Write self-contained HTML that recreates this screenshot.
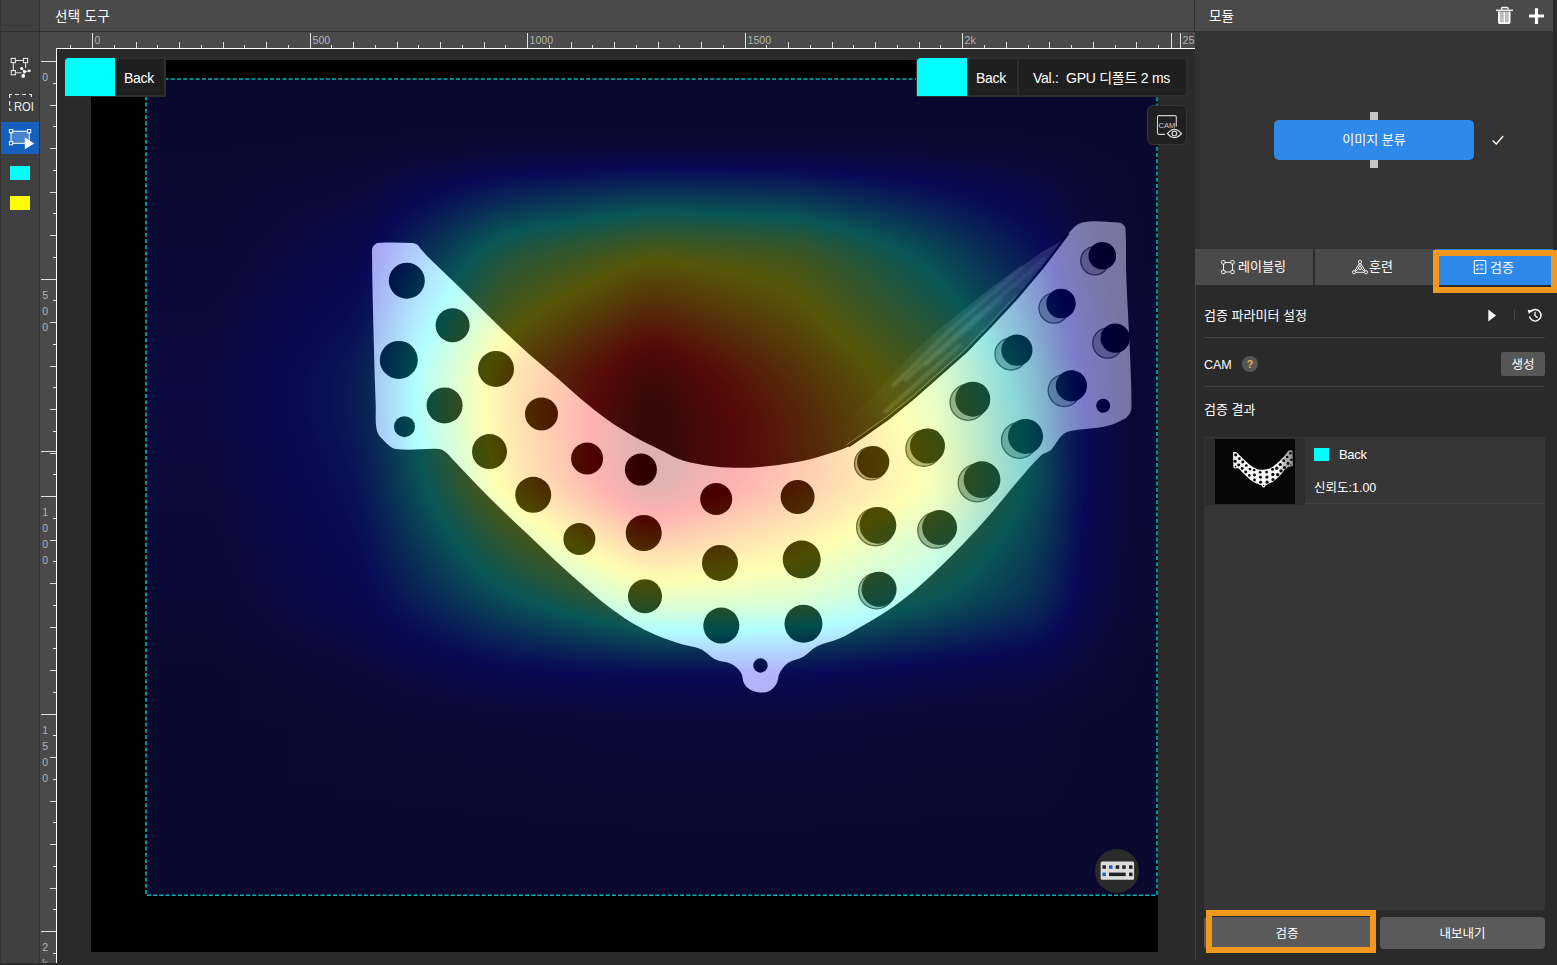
<!DOCTYPE html><html lang="ko"><head><meta charset="utf-8"><title>CAM</title><style>
*{box-sizing:border-box;margin:0;padding:0}
html,body{width:1557px;height:965px;overflow:hidden;background:#2a2a2a}
body{position:relative;font-family:"Liberation Sans","Noto Sans CJK KR",sans-serif;color:#f0f0f0;font-size:13px}
.abs{position:absolute}
.t{position:absolute;white-space:nowrap;line-height:1}
svg{position:absolute;display:block;overflow:visible}
</style></head><body><div class="abs" style="left:0;top:0;width:40px;height:965px;background:#3f3f3f;border-right:1px solid #323232"></div>
<div class="abs" style="left:0;top:31px;width:39px;height:1px;background:#303030"></div>
<div class="abs" style="left:40px;top:0;width:1155px;height:32px;background:#4a4a4a;border-bottom:1px solid #303030"></div>
<div class="t" style="left:55px;top:10px;font-size:13.5px;letter-spacing:0.3px;color:#fff">선택 도구</div>
<div class="abs" style="left:40px;top:32px;width:1155px;height:17px;background:#4a4a4a"></div>
<div class="abs" style="left:40px;top:32px;width:17px;height:933px;background:#4a4a4a"></div>
<div class="abs" style="left:57px;top:49px;width:1138px;height:916px;background:#2a2a2a"></div>
<div class="abs" style="left:91px;top:60px;width:1067px;height:892px;background:#000"></div>
<div class="abs" style="left:0;top:0;width:1px;height:965px;background:#353535"></div>
<svg style="left:0;top:0" width="1195" height="965" viewBox="0 0 1195 965" font-family='Liberation Sans, sans-serif'><path d="M56.5 965V48.5H1195" fill="none" stroke="#fff" stroke-width="1"/><path d="M70.5 45V48M92.5 33V48M114.5 45V48M136.5 42V48M157.5 45V48M179.5 42V48M201.5 45V48M223.5 42V48M244.5 45V48M266.5 42V48M288.5 45V48M310.5 33V48M331.5 45V48M353.5 42V48M375.5 45V48M397.5 42V48M418.5 45V48M440.5 42V48M462.5 45V48M484.5 42V48M505.5 45V48M527.5 33V48M549.5 45V48M571.5 42V48M592.5 45V48M614.5 42V48M636.5 45V48M658.5 42V48M679.5 45V48M701.5 42V48M723.5 45V48M745.5 33V48M766.5 45V48M788.5 42V48M810.5 45V48M832.5 42V48M853.5 45V48M875.5 42V48M897.5 45V48M919.5 42V48M940.5 45V48M962.5 33V48M984.5 45V48M1006.5 42V48M1028.5 45V48M1049.5 42V48M1071.5 45V48M1093.5 42V48M1115.5 45V48M1136.5 42V48M1158.5 45V48M1180.5 33V48M1171.5 33V48" stroke="#e0e0e0" stroke-width="1" fill="none"/><text x="94.5" y="44.2" font-size="10.6" fill="#b4b4b4">0</text><text x="312.5" y="44.2" font-size="10.6" fill="#b4b4b4">500</text><text x="529.5" y="44.2" font-size="10.6" fill="#b4b4b4">1000</text><text x="747.5" y="44.2" font-size="10.6" fill="#b4b4b4">1500</text><text x="964.5" y="44.2" font-size="10.6" fill="#b4b4b4">2k</text><text x="1182.5" y="44.2" font-size="10.6" fill="#b4b4b4">25</text><path d="M41 61.5H56M53 83.5H56M50 105.5H56M53 126.5H56M50 148.5H56M53 170.5H56M50 192.5H56M53 213.5H56M50 235.5H56M53 257.5H56M41 279.5H56M53 300.5H56M50 322.5H56M53 344.5H56M50 366.5H56M53 387.5H56M50 409.5H56M53 431.5H56M50 453.5H56M53 474.5H56M41 496.5H56M53 518.5H56M50 540.5H56M53 561.5H56M50 583.5H56M53 605.5H56M50 627.5H56M53 648.5H56M50 670.5H56M53 692.5H56M41 714.5H56M53 735.5H56M50 757.5H56M53 779.5H56M50 801.5H56M53 822.5H56M50 844.5H56M53 866.5H56M50 888.5H56M53 909.5H56M41 931.5H56M53 953.5H56M41 451.5H56" stroke="#e0e0e0" stroke-width="1" fill="none"/><text x="42.3" y="81.0" font-size="10.6" fill="#b4b4b4">0</text><text x="42.3" y="298.6" font-size="10.6" fill="#b4b4b4">5</text><text x="42.3" y="314.6" font-size="10.6" fill="#b4b4b4">0</text><text x="42.3" y="330.6" font-size="10.6" fill="#b4b4b4">0</text><text x="42.3" y="516.1" font-size="10.6" fill="#b4b4b4">1</text><text x="42.3" y="532.1" font-size="10.6" fill="#b4b4b4">0</text><text x="42.3" y="548.1" font-size="10.6" fill="#b4b4b4">0</text><text x="42.3" y="564.1" font-size="10.6" fill="#b4b4b4">0</text><text x="42.3" y="733.7" font-size="10.6" fill="#b4b4b4">1</text><text x="42.3" y="749.7" font-size="10.6" fill="#b4b4b4">5</text><text x="42.3" y="765.7" font-size="10.6" fill="#b4b4b4">0</text><text x="42.3" y="781.7" font-size="10.6" fill="#b4b4b4">0</text><text x="42.3" y="951.2" font-size="10.6" fill="#b4b4b4">2</text><text x="42.3" y="967.2" font-size="10.6" fill="#b4b4b4">k</text></svg>
<div class="abs" style="left:0;top:963px;width:1195px;height:2px;background:#2a2a2a"></div>
<svg style="left:0;top:0" width="1557" height="965" viewBox="0 0 1557 965"><defs><linearGradient id="hr0" gradientUnits="userSpaceOnUse" x1="217.3" y1="0" x2="1135.0" y2="0"><stop offset="0.0000" stop-color="rgb(0,0,0)"/><stop offset="0.1576" stop-color="rgb(0,0,0)"/><stop offset="0.3150" stop-color="rgb(0,0,0)"/><stop offset="0.4726" stop-color="rgb(0,0,0)"/><stop offset="0.6302" stop-color="rgb(0,0,0)"/><stop offset="0.7876" stop-color="rgb(0,0,0)"/><stop offset="0.8965" stop-color="rgb(0,0,0)"/><stop offset="0.9452" stop-color="rgb(0,0,0)"/><stop offset="1.0000" stop-color="rgb(0,0,0)"/></linearGradient><linearGradient id="hr1" gradientUnits="userSpaceOnUse" x1="217.3" y1="0" x2="1135.0" y2="0"><stop offset="0.0000" stop-color="rgb(5,0,0)"/><stop offset="0.1576" stop-color="rgb(23,0,0)"/><stop offset="0.3150" stop-color="rgb(117,0,0)"/><stop offset="0.4726" stop-color="rgb(156,0,0)"/><stop offset="0.6302" stop-color="rgb(143,0,0)"/><stop offset="0.7876" stop-color="rgb(84,0,0)"/><stop offset="0.8965" stop-color="rgb(38,0,0)"/><stop offset="0.9452" stop-color="rgb(10,0,0)"/><stop offset="1.0000" stop-color="rgb(0,0,0)"/></linearGradient><linearGradient id="hr2" gradientUnits="userSpaceOnUse" x1="217.3" y1="0" x2="1135.0" y2="0"><stop offset="0.0000" stop-color="rgb(13,0,0)"/><stop offset="0.1576" stop-color="rgb(48,0,0)"/><stop offset="0.3150" stop-color="rgb(178,0,0)"/><stop offset="0.4726" stop-color="rgb(245,0,0)"/><stop offset="0.6302" stop-color="rgb(191,0,0)"/><stop offset="0.7876" stop-color="rgb(135,0,0)"/><stop offset="0.8965" stop-color="rgb(74,0,0)"/><stop offset="0.9452" stop-color="rgb(26,0,0)"/><stop offset="1.0000" stop-color="rgb(5,0,0)"/></linearGradient><linearGradient id="hr3" gradientUnits="userSpaceOnUse" x1="217.3" y1="0" x2="1135.0" y2="0"><stop offset="0.0000" stop-color="rgb(13,0,0)"/><stop offset="0.1576" stop-color="rgb(48,0,0)"/><stop offset="0.3150" stop-color="rgb(178,0,0)"/><stop offset="0.4726" stop-color="rgb(255,0,0)"/><stop offset="0.6302" stop-color="rgb(204,0,0)"/><stop offset="0.7876" stop-color="rgb(143,0,0)"/><stop offset="0.8965" stop-color="rgb(82,0,0)"/><stop offset="0.9452" stop-color="rgb(31,0,0)"/><stop offset="1.0000" stop-color="rgb(5,0,0)"/></linearGradient><linearGradient id="hr4" gradientUnits="userSpaceOnUse" x1="217.3" y1="0" x2="1135.0" y2="0"><stop offset="0.0000" stop-color="rgb(10,0,0)"/><stop offset="0.1576" stop-color="rgb(41,0,0)"/><stop offset="0.3150" stop-color="rgb(168,0,0)"/><stop offset="0.4726" stop-color="rgb(255,0,0)"/><stop offset="0.6302" stop-color="rgb(204,0,0)"/><stop offset="0.7876" stop-color="rgb(153,0,0)"/><stop offset="0.8965" stop-color="rgb(87,0,0)"/><stop offset="0.9452" stop-color="rgb(31,0,0)"/><stop offset="1.0000" stop-color="rgb(5,0,0)"/></linearGradient><linearGradient id="hr5" gradientUnits="userSpaceOnUse" x1="217.3" y1="0" x2="1135.0" y2="0"><stop offset="0.0000" stop-color="rgb(5,0,0)"/><stop offset="0.1576" stop-color="rgb(26,0,0)"/><stop offset="0.3150" stop-color="rgb(87,0,0)"/><stop offset="0.4726" stop-color="rgb(138,0,0)"/><stop offset="0.6302" stop-color="rgb(133,0,0)"/><stop offset="0.7876" stop-color="rgb(94,0,0)"/><stop offset="0.8965" stop-color="rgb(61,0,0)"/><stop offset="0.9452" stop-color="rgb(23,0,0)"/><stop offset="1.0000" stop-color="rgb(3,0,0)"/></linearGradient><linearGradient id="hr6" gradientUnits="userSpaceOnUse" x1="217.3" y1="0" x2="1135.0" y2="0"><stop offset="0.0000" stop-color="rgb(0,0,0)"/><stop offset="0.1576" stop-color="rgb(8,0,0)"/><stop offset="0.3150" stop-color="rgb(26,0,0)"/><stop offset="0.4726" stop-color="rgb(33,0,0)"/><stop offset="0.6302" stop-color="rgb(31,0,0)"/><stop offset="0.7876" stop-color="rgb(20,0,0)"/><stop offset="0.8965" stop-color="rgb(15,0,0)"/><stop offset="0.9452" stop-color="rgb(8,0,0)"/><stop offset="1.0000" stop-color="rgb(0,0,0)"/></linearGradient><linearGradient id="hr7" gradientUnits="userSpaceOnUse" x1="217.3" y1="0" x2="1135.0" y2="0"><stop offset="0.0000" stop-color="rgb(0,0,0)"/><stop offset="0.1576" stop-color="rgb(3,0,0)"/><stop offset="0.3150" stop-color="rgb(5,0,0)"/><stop offset="0.4726" stop-color="rgb(8,0,0)"/><stop offset="0.6302" stop-color="rgb(8,0,0)"/><stop offset="0.7876" stop-color="rgb(5,0,0)"/><stop offset="0.8965" stop-color="rgb(5,0,0)"/><stop offset="0.9452" stop-color="rgb(0,0,0)"/><stop offset="1.0000" stop-color="rgb(0,0,0)"/></linearGradient><linearGradient id="hr8" gradientUnits="userSpaceOnUse" x1="217.3" y1="0" x2="1135.0" y2="0"><stop offset="0.0000" stop-color="rgb(0,0,0)"/><stop offset="0.1576" stop-color="rgb(0,0,0)"/><stop offset="0.3150" stop-color="rgb(0,0,0)"/><stop offset="0.4726" stop-color="rgb(0,0,0)"/><stop offset="0.6302" stop-color="rgb(0,0,0)"/><stop offset="0.7876" stop-color="rgb(0,0,0)"/><stop offset="0.8965" stop-color="rgb(0,0,0)"/><stop offset="0.9452" stop-color="rgb(0,0,0)"/><stop offset="1.0000" stop-color="rgb(0,0,0)"/></linearGradient><linearGradient id="hm0" gradientUnits="userSpaceOnUse" x1="0" y1="146.0" x2="0" y2="253.1"><stop offset="0" stop-color="#fff" stop-opacity="0"/><stop offset="1" stop-color="#fff" stop-opacity="1"/></linearGradient><mask id="hk0" maskUnits="userSpaceOnUse" x="75" y="145.0" width="1152" height="109.1"><rect x="75" y="145.0" width="1152" height="109.1" fill="url(#hm0)"/></mask><linearGradient id="hm1" gradientUnits="userSpaceOnUse" x1="0" y1="253.1" x2="0" y2="369.8"><stop offset="0" stop-color="#fff" stop-opacity="0"/><stop offset="1" stop-color="#fff" stop-opacity="1"/></linearGradient><mask id="hk1" maskUnits="userSpaceOnUse" x="75" y="252.1" width="1152" height="118.7"><rect x="75" y="252.1" width="1152" height="118.7" fill="url(#hm1)"/></mask><linearGradient id="hm2" gradientUnits="userSpaceOnUse" x1="0" y1="369.8" x2="0" y2="420.0"><stop offset="0" stop-color="#fff" stop-opacity="0"/><stop offset="1" stop-color="#fff" stop-opacity="1"/></linearGradient><mask id="hk2" maskUnits="userSpaceOnUse" x="75" y="368.8" width="1152" height="52.2"><rect x="75" y="368.8" width="1152" height="52.2" fill="url(#hm2)"/></mask><linearGradient id="hm3" gradientUnits="userSpaceOnUse" x1="0" y1="420.0" x2="0" y2="486.5"><stop offset="0" stop-color="#fff" stop-opacity="0"/><stop offset="1" stop-color="#fff" stop-opacity="1"/></linearGradient><mask id="hk3" maskUnits="userSpaceOnUse" x="75" y="419.0" width="1152" height="68.5"><rect x="75" y="419.0" width="1152" height="68.5" fill="url(#hm3)"/></mask><linearGradient id="hm4" gradientUnits="userSpaceOnUse" x1="0" y1="486.5" x2="0" y2="603.2"><stop offset="0" stop-color="#fff" stop-opacity="0"/><stop offset="1" stop-color="#fff" stop-opacity="1"/></linearGradient><mask id="hk4" maskUnits="userSpaceOnUse" x="75" y="485.5" width="1152" height="118.7"><rect x="75" y="485.5" width="1152" height="118.7" fill="url(#hm4)"/></mask><linearGradient id="hm5" gradientUnits="userSpaceOnUse" x1="0" y1="603.2" x2="0" y2="672.0"><stop offset="0" stop-color="#fff" stop-opacity="0"/><stop offset="1" stop-color="#fff" stop-opacity="1"/></linearGradient><mask id="hk5" maskUnits="userSpaceOnUse" x="75" y="602.2" width="1152" height="70.8"><rect x="75" y="602.2" width="1152" height="70.8" fill="url(#hm5)"/></mask><linearGradient id="hm6" gradientUnits="userSpaceOnUse" x1="0" y1="672.0" x2="0" y2="719.9"><stop offset="0" stop-color="#fff" stop-opacity="0"/><stop offset="1" stop-color="#fff" stop-opacity="1"/></linearGradient><mask id="hk6" maskUnits="userSpaceOnUse" x="75" y="671.0" width="1152" height="49.9"><rect x="75" y="671.0" width="1152" height="49.9" fill="url(#hm6)"/></mask><linearGradient id="hm7" gradientUnits="userSpaceOnUse" x1="0" y1="719.9" x2="0" y2="836.6"><stop offset="0" stop-color="#fff" stop-opacity="0"/><stop offset="1" stop-color="#fff" stop-opacity="1"/></linearGradient><mask id="hk7" maskUnits="userSpaceOnUse" x="75" y="718.9" width="1152" height="118.7"><rect x="75" y="718.9" width="1152" height="118.7" fill="url(#hm7)"/></mask><linearGradient id="pg" gradientUnits="userSpaceOnUse" x1="372" y1="0" x2="1131" y2="0"><stop offset="0" stop-color="rgb(0,166,0)"/><stop offset="0.06" stop-color="rgb(0,178,0)"/><stop offset="0.74" stop-color="rgb(0,178,0)"/><stop offset="0.83" stop-color="rgb(0,145,0)"/><stop offset="0.9" stop-color="rgb(0,125,0)"/><stop offset="1" stop-color="rgb(0,117,0)"/></linearGradient><linearGradient id="fg" gradientUnits="userSpaceOnUse" x1="1070" y1="232" x2="835" y2="440"><stop offset="0" stop-color="rgb(0,43,0)"/><stop offset="0.5" stop-color="rgb(0,23,0)"/><stop offset="1" stop-color="rgb(0,9,0)"/></linearGradient><filter id="soft" x="-0.1" y="-0.1" width="1.2" height="1.2"><feGaussianBlur stdDeviation="1.6"/></filter><filter id="cam" filterUnits="userSpaceOnUse" x="75" y="8" width="1152" height="957" color-interpolation-filters="sRGB"><feColorMatrix in="SourceGraphic" type="matrix" values="1 0 0 0 0 1 0 0 0 0 1 0 0 0 0 0 0 0 0 1" result="hg"/><feGaussianBlur in="hg" stdDeviation="13" result="hb"/><feComponentTransfer in="hb" result="heat"><feFuncR type="table" tableValues="0.000 0.000 0.000 0.000 0.000 0.000 0.000 0.000 0.000 0.000 0.000 0.000 0.000 0.038 0.076 0.114 0.152 0.191 0.229 0.267 0.305 0.305 0.305 0.305 0.305 0.305 0.305 0.305 0.305 0.267 0.229 0.191 0.152"/><feFuncG type="table" tableValues="0.000 0.000 0.000 0.000 0.000 0.038 0.076 0.114 0.152 0.191 0.229 0.267 0.305 0.305 0.305 0.305 0.305 0.305 0.305 0.305 0.305 0.267 0.229 0.191 0.152 0.114 0.076 0.038 0.000 0.000 0.000 0.000 0.000"/><feFuncB type="table" tableValues="0.152 0.191 0.229 0.267 0.305 0.305 0.305 0.305 0.305 0.305 0.305 0.305 0.305 0.267 0.229 0.191 0.152 0.114 0.076 0.038 0.000 0.000 0.000 0.000 0.000 0.000 0.000 0.000 0.000 0.000 0.000 0.000 0.000"/></feComponentTransfer><feColorMatrix in="SourceGraphic" type="matrix" values="0 1 0 0 0 0 1 0 0 0 0 1 0 0 0 0 0 0 0 1" result="gray"/><feComposite in="heat" in2="gray" operator="arithmetic" k1="0" k2="1" k3="1" k4="0"/></filter></defs><clipPath id="hclip"><rect x="145" y="78" width="1012" height="817"/></clipPath><g clip-path="url(#hclip)"><g filter="url(#cam)"><g><rect x="75" y="8" width="1152" height="138.5" fill="url(#hr0)"/><rect x="75" y="146.0" width="1152" height="107.6" fill="url(#hr0)"/><rect x="75" y="146.0" width="1152" height="107.6" fill="url(#hr1)" mask="url(#hk0)"/><rect x="75" y="253.1" width="1152" height="117.2" fill="url(#hr1)"/><rect x="75" y="253.1" width="1152" height="117.2" fill="url(#hr2)" mask="url(#hk1)"/><rect x="75" y="369.8" width="1152" height="50.7" fill="url(#hr2)"/><rect x="75" y="369.8" width="1152" height="50.7" fill="url(#hr3)" mask="url(#hk2)"/><rect x="75" y="420.0" width="1152" height="67.0" fill="url(#hr3)"/><rect x="75" y="420.0" width="1152" height="67.0" fill="url(#hr4)" mask="url(#hk3)"/><rect x="75" y="486.5" width="1152" height="117.2" fill="url(#hr4)"/><rect x="75" y="486.5" width="1152" height="117.2" fill="url(#hr5)" mask="url(#hk4)"/><rect x="75" y="603.2" width="1152" height="69.3" fill="url(#hr5)"/><rect x="75" y="603.2" width="1152" height="69.3" fill="url(#hr6)" mask="url(#hk5)"/><rect x="75" y="672.0" width="1152" height="48.4" fill="url(#hr6)"/><rect x="75" y="672.0" width="1152" height="48.4" fill="url(#hr7)" mask="url(#hk6)"/><rect x="75" y="719.9" width="1152" height="117.2" fill="url(#hr7)"/><rect x="75" y="719.9" width="1152" height="117.2" fill="url(#hr8)" mask="url(#hk7)"/><rect x="75" y="836.6" width="1152" height="128.4" fill="url(#hr8)"/></g><g style="mix-blend-mode:screen"><rect x="75" y="8" width="1152" height="957" fill="rgb(0,9,0)"/><path d="M1061.0 241.0 L1043.0 251.4 L1017.0 269.4 L991.4 287.4 L965.7 308.0 L940.0 328.5 L914.0 351.7 L888.5 380.0 L863.0 405.7 L837.0 431.0 L824.0 448.0 L848.5 446.4 L863.0 436.5 L888.5 418.5 L914.0 398.0 L940.0 375.0 L966.0 352.0 L991.0 326.0 L1017.0 298.0 L1043.0 267.0 L1068.5 233.4 L1082.6 222.6Z" fill="url(#fg)"/><g filter="url(#soft)"><path d="M1046 258L975 318L905 380M1022 268L950 330L893 386M1000 300L925 365M960 345L885 412" fill="none" stroke="rgb(0,51,0)" stroke-width="3" stroke-linecap="round"/></g><path d="M372.0 250.0C372.0 248.6 372.6 247.1 373.5 246.0C374.7 244.6 376.2 243.1 378.0 243.0C389.3 242.1 400.7 242.6 412.0 243.0C413.7 243.1 415.5 243.6 417.0 244.5C418.3 245.3 419.0 246.8 420.0 248.0C422.3 250.7 424.5 253.5 427.0 256.0C435.5 264.5 444.4 272.6 453.0 281.0C461.5 289.3 470.0 297.7 478.5 306.0C487.0 314.3 495.4 322.8 504.0 331.0C512.5 339.1 521.2 347.2 530.0 355.0C538.5 362.5 547.4 369.6 556.0 377.0C564.4 384.3 572.5 391.9 581.0 399.0C589.5 406.1 598.0 413.1 607.0 419.5C615.4 425.5 624.1 430.9 633.0 436.0C641.3 440.7 649.9 444.8 658.5 449.0C666.6 453.0 674.4 457.7 683.0 460.6C691.2 463.3 699.9 464.5 708.5 465.7C716.9 466.9 725.5 467.6 734.0 467.8C742.7 468.0 751.4 467.8 760.0 467.0C772.4 465.9 784.8 464.3 797.0 462.0C805.8 460.4 814.4 458.0 823.0 455.4C831.6 452.8 840.4 450.3 848.5 446.4C853.8 443.9 858.2 439.8 863.0 436.5C871.5 430.5 880.2 424.8 888.5 418.5C897.2 411.9 905.7 405.0 914.0 398.0C922.8 390.5 931.3 382.7 940.0 375.0C948.7 367.3 957.7 360.0 966.0 352.0C974.7 343.7 982.7 334.7 991.0 326.0C999.7 316.7 1008.6 307.6 1017.0 298.0C1025.9 287.9 1034.6 277.5 1043.0 267.0C1051.8 256.0 1059.1 243.9 1068.5 233.4C1072.4 229.0 1076.8 223.9 1082.6 222.6C1094.1 220.1 1106.2 222.0 1118.0 222.6C1119.8 222.7 1121.6 223.3 1123.0 224.5C1124.3 225.6 1125.4 227.3 1125.5 229.0C1126.5 245.0 1125.7 261.0 1126.3 277.0C1127.2 302.7 1129.0 328.3 1130.0 354.0C1130.7 371.2 1131.5 388.5 1131.5 405.7C1131.5 408.2 1131.1 410.8 1130.0 413.0C1128.9 415.2 1127.2 417.3 1125.0 418.5C1119.3 421.7 1113.3 424.6 1107.0 426.0C1094.4 428.9 1081.1 428.5 1068.5 431.4C1065.5 432.1 1062.9 434.3 1060.8 436.5C1057.0 440.5 1055.0 446.2 1051.0 450.0C1048.3 452.6 1043.7 452.8 1041.0 455.4C1031.8 464.1 1023.9 474.1 1015.6 483.7C1006.9 493.8 998.8 504.4 990.0 514.5C981.6 524.2 972.9 533.7 964.0 543.0C955.7 551.7 947.2 560.2 938.5 568.5C930.2 576.4 921.9 584.4 913.0 591.7C904.7 598.6 896.0 605.0 887.0 611.0C878.7 616.6 870.0 621.4 861.4 626.4C854.3 630.5 847.4 634.9 840.0 638.2C832.5 641.6 824.1 642.7 816.7 646.4C811.7 648.9 808.2 653.9 803.3 656.7C798.5 659.4 792.5 659.8 788.0 662.9C784.4 665.4 781.8 669.2 779.7 673.0C777.9 676.2 778.4 680.3 776.6 683.4C774.9 686.4 772.5 689.3 769.4 691.0C766.7 692.5 763.3 692.6 760.2 692.5C757.4 692.4 754.5 691.9 752.0 690.6C749.2 689.1 746.4 687.2 744.7 684.5C742.4 680.8 743.0 675.7 740.6 672.0C738.4 668.6 735.1 665.7 731.4 663.9C726.6 661.5 720.8 662.1 716.0 659.8C710.3 657.1 706.2 651.6 700.5 649.0C695.0 646.4 688.6 646.2 682.8 644.4C674.1 641.7 665.4 639.0 657.0 635.4C648.2 631.7 639.6 627.4 631.4 622.5C622.4 617.1 614.0 610.9 605.7 604.5C596.8 597.6 588.5 590.1 580.0 582.7C571.3 575.1 562.7 567.4 554.2 559.5C545.5 551.5 537.1 543.1 528.5 535.0C519.9 526.9 511.3 518.9 502.8 510.7C494.1 502.2 485.5 493.7 477.0 485.0C468.3 476.1 460.0 467.0 451.4 458.0C449.3 455.8 447.5 453.3 445.0 451.6C443.1 450.3 440.9 449.1 438.6 449.0C424.4 448.2 410.1 451.0 396.0 449.0C391.5 448.4 388.0 444.5 384.7 441.4C381.6 438.4 378.0 435.2 377.0 431.0C374.9 422.6 376.0 413.7 375.7 405.0C374.9 383.0 374.2 361.0 373.7 339.0C373.0 309.3 372.1 279.7 372.0 250.0Z" fill="url(#pg)"/><circle cx="406.8" cy="280.7" r="18.0" fill="rgb(0,0,0)"/><circle cx="452.6" cy="325.2" r="17.0" fill="rgb(0,0,0)"/><circle cx="398.8" cy="359.9" r="19.0" fill="rgb(0,0,0)"/><circle cx="496.0" cy="368.9" r="18.0" fill="rgb(0,0,0)"/><circle cx="444.6" cy="405.4" r="18.0" fill="rgb(0,0,0)"/><circle cx="404.5" cy="426.7" r="10.5" fill="rgb(0,0,0)"/><circle cx="541.5" cy="413.9" r="16.5" fill="rgb(0,0,0)"/><circle cx="489.5" cy="451.6" r="17.5" fill="rgb(0,0,0)"/><circle cx="587.1" cy="458.5" r="16.0" fill="rgb(0,0,0)"/><circle cx="640.9" cy="469.6" r="16.0" fill="rgb(0,0,0)"/><circle cx="533.2" cy="494.8" r="18.0" fill="rgb(0,0,0)"/><circle cx="579.4" cy="539.0" r="16.0" fill="rgb(0,0,0)"/><circle cx="643.7" cy="533.0" r="18.0" fill="rgb(0,0,0)"/><circle cx="716.2" cy="499.0" r="16.0" fill="rgb(0,0,0)"/><circle cx="797.6" cy="497.0" r="17.0" fill="rgb(0,0,0)"/><circle cx="720.0" cy="562.9" r="18.0" fill="rgb(0,0,0)"/><circle cx="645.0" cy="596.3" r="17.0" fill="rgb(0,0,0)"/><circle cx="721.3" cy="625.6" r="18.0" fill="rgb(0,0,0)"/><circle cx="801.7" cy="559.5" r="19.0" fill="rgb(0,0,0)"/><circle cx="803.5" cy="623.8" r="19.0" fill="rgb(0,0,0)"/><circle cx="870.9" cy="463.5" r="16.4" fill="rgb(0,112,0)" stroke="rgb(0,38,0)" stroke-width="1.3"/><circle cx="873.2" cy="462.0" r="16.1" fill="rgb(0,0,0)"/><circle cx="923.8" cy="448.5" r="17.9" fill="rgb(0,106,0)" stroke="rgb(0,38,0)" stroke-width="1.3"/><circle cx="927.5" cy="446.0" r="17.5" fill="rgb(0,0,0)"/><circle cx="875.4" cy="527.0" r="18.8" fill="rgb(0,112,0)" stroke="rgb(0,38,0)" stroke-width="1.3"/><circle cx="877.9" cy="525.3" r="18.4" fill="rgb(0,0,0)"/><circle cx="935.7" cy="530.3" r="17.9" fill="rgb(0,105,0)" stroke="rgb(0,38,0)" stroke-width="1.3"/><circle cx="939.6" cy="527.6" r="17.5" fill="rgb(0,0,0)"/><circle cx="977.0" cy="483.0" r="18.8" fill="rgb(0,100,0)" stroke="rgb(0,38,0)" stroke-width="1.3"/><circle cx="982.0" cy="479.7" r="18.4" fill="rgb(0,0,0)"/><circle cx="876.6" cy="591.0" r="17.9" fill="rgb(0,112,0)" stroke="rgb(0,38,0)" stroke-width="1.3"/><circle cx="879.1" cy="589.3" r="17.5" fill="rgb(0,0,0)"/><circle cx="1019.4" cy="440.4" r="17.9" fill="rgb(0,96,0)" stroke="rgb(0,38,0)" stroke-width="1.3"/><circle cx="1025.5" cy="436.4" r="17.5" fill="rgb(0,0,0)"/><circle cx="968.0" cy="402.4" r="17.9" fill="rgb(0,101,0)" stroke="rgb(0,38,0)" stroke-width="1.3"/><circle cx="972.8" cy="399.2" r="17.5" fill="rgb(0,0,0)"/><circle cx="1011.0" cy="354.0" r="16.0" fill="rgb(0,97,0)" stroke="rgb(0,38,0)" stroke-width="1.3"/><circle cx="1016.9" cy="350.1" r="15.6" fill="rgb(0,0,0)"/><circle cx="1054.0" cy="308.2" r="15.0" fill="rgb(0,92,0)" stroke="rgb(0,38,0)" stroke-width="1.3"/><circle cx="1061.0" cy="303.5" r="14.7" fill="rgb(0,0,0)"/><circle cx="1094.8" cy="260.8" r="14.1" fill="rgb(0,89,0)" stroke="rgb(0,38,0)" stroke-width="1.3"/><circle cx="1102.3" cy="255.8" r="13.8" fill="rgb(0,0,0)"/><circle cx="1107.7" cy="343.1" r="15.0" fill="rgb(0,89,0)" stroke="rgb(0,38,0)" stroke-width="1.3"/><circle cx="1115.2" cy="338.1" r="14.7" fill="rgb(0,0,0)"/><circle cx="1064.2" cy="390.6" r="16.0" fill="rgb(0,91,0)" stroke="rgb(0,38,0)" stroke-width="1.3"/><circle cx="1071.4" cy="385.8" r="15.6" fill="rgb(0,0,0)"/><circle cx="1103.2" cy="405.7" r="7.0" fill="rgb(0,0,0)"/><circle cx="760.5" cy="665.5" r="7.2" fill="rgb(0,0,0)"/><path d="M1068.5 233.4 L1043.0 267.0 L1017.0 298.0 L991.0 326.0 L966.0 352.0 L940.0 375.0 L914.0 398.0 L888.5 418.5 L863.0 436.5 L848.5 446.4" fill="none" stroke="rgb(0,0,0)" stroke-width="2.2"/><path d="M1017.0 298.0 L991.0 326.0 L966.0 352.0 L940.0 375.0 L914.0 398.0 L888.5 418.5 L863.0 436.5 L848.5 446.4" fill="none" stroke="rgb(0,76,0)" stroke-width="1" transform="translate(-1.8,-1.6)"/></g></g></g><rect x="146" y="79" width="1011" height="816.3" fill="none" stroke="#000" stroke-width="2"/><rect x="146" y="79" width="1011" height="816.3" fill="none" stroke="#00b6c2" stroke-width="1.6" stroke-dasharray="4 2.2"/></svg>
<div class="abs" style="left:64px;top:57px;width:102px;height:40px;background:#2e2e2e;border-radius:4px 2px 2px 2px"></div><div class="abs" style="left:65px;top:58px;width:50px;height:38px;background:#00ffff;border-radius:4px 0 0 0"></div><div class="abs" style="left:115px;top:59px;width:49px;height:36px;background:#1f1f1f"></div><div class="t" style="left:124px;top:71px;font-size:14px;color:#fff;letter-spacing:-0.3px">Back</div>
<div class="abs" style="left:916px;top:57px;width:271px;height:40px;background:#2e2e2e;border-radius:4px 2px 2px 2px"></div><div class="abs" style="left:917px;top:58px;width:50px;height:38px;background:#00ffff;border-radius:4px 0 0 0"></div><div class="abs" style="left:967px;top:59px;width:50px;height:36px;background:#1f1f1f"></div><div class="t" style="left:976px;top:71px;font-size:14px;color:#fff;letter-spacing:-0.3px">Back</div><div class="abs" style="left:1019px;top:59px;width:167px;height:36px;background:#1f1f1f"></div><div class="t" style="left:1033px;top:71px;font-size:14px;color:#fff;letter-spacing:-0.25px">Val.:&nbsp; GPU 디폴트 2 ms</div>
<div class="abs" style="left:1147px;top:105px;width:40px;height:40px;background:#202020;border:1px solid #363636;border-radius:6px"></div>
<svg style="left:1147px;top:105px" width="40" height="40" viewBox="1147 105 40 40"><path d="M1176.3 126.5V117a1.4 1.4 0 0 0-1.4-1.4h-16a1.4 1.4 0 0 0-1.4 1.4v16a1.4 1.4 0 0 0 1.4 1.4H1165" fill="none" stroke="#d0d0d0" stroke-width="1.1"/><text x="1158.6" y="127.6" font-size="7.6" fill="#d0d0d0" font-family="Liberation Sans, sans-serif" textLength="16.8" lengthAdjust="spacingAndGlyphs">CAM</text><path d="M1167.5 133.5q6.900-8.2 13.900 0q-7 8.2-13.900 0z" fill="#202020" stroke="#d0d0d0" stroke-width="1.3"/><circle cx="1174.4" cy="133.5" r="2.3" fill="none" stroke="#d0d0d0" stroke-width="1.3"/></svg>
<svg style="left:1090px;top:845px" width="56" height="56" viewBox="1090 845 56 56"><circle cx="1117" cy="871.5" r="22" fill="#000" opacity="0.25"/><circle cx="1117" cy="871" r="22" fill="#2a2a2a"/><rect x="1100.7" y="861.5" width="33.4" height="18.2" rx="1.5" fill="#dcdcdc"/><rect x="1102.4" y="865.3" width="3.5" height="3.5" fill="#222"/><rect x="1109.0" y="865.3" width="3.5" height="3.5" fill="#1565c8"/><rect x="1115.7" y="865.3" width="3.5" height="3.5" fill="#222"/><rect x="1122.2" y="865.3" width="3.5" height="3.5" fill="#222"/><rect x="1129.0" y="865.3" width="3.5" height="3.5" fill="#222"/><rect x="1102.4" y="872.6" width="3.5" height="3.5" fill="#1565c8"/><rect x="1109" y="872.6" width="16.7" height="3.5" fill="#222"/><rect x="1129" y="872.6" width="3.5" height="3.5" fill="#222"/></svg>
<svg style="left:0;top:0" width="40" height="230" viewBox="0 0 40 230"><g fill="none" stroke="#e4e4e4" stroke-width="1.1"><rect x="11.2" y="58.4" width="4.2" height="4.2"/><rect x="23.5" y="58.4" width="4.2" height="4.2"/><rect x="11.2" y="70.6" width="4.2" height="4.2"/><path d="M15.4 60.5H23.5M13.3 62.6V70.6M25.6 62.6V68M15.4 72.7H21.5"/><path d="M21.7 68.5L24.6 71.6L29.3 70.8M24.6 71.6L23.2 75.9" stroke-width="1"/></g><g fill="#fff"><circle cx="21.7" cy="68.5" r="1.6"/><circle cx="24.6" cy="71.6" r="1.7"/><circle cx="29.3" cy="70.8" r="1.4"/><circle cx="23.2" cy="75.9" r="1.9"/></g><path d="M9.6 98V94.5H12M15 94.5H19M22 94.5H26M29 94.5H31.4V97M9.6 101V105.5M9.6 108V110.2H12" fill="none" stroke="#e8e8e8" stroke-width="1.1"/><text x="14" y="110.7" font-size="12.3" fill="#f0f0f0" font-family="Liberation Sans, sans-serif" textLength="20" lengthAdjust="spacingAndGlyphs">ROI</text><rect x="1" y="122" width="38" height="32" fill="#1560bd"/><rect x="11" y="131.2" width="18.2" height="12.1" fill="#fff" fill-opacity="0.22" stroke="#fff" stroke-width="1"/><g fill="#1560bd" stroke="#fff" stroke-width="1"><rect x="9.4" y="129.6" width="3.2" height="3.2"/><rect x="27.5" y="129.6" width="3.2" height="3.2"/><rect x="9.4" y="141.6" width="3.2" height="3.2"/></g><path d="M24.8 137.6V149.2L34.2 143.5z" fill="#fff"/><rect x="10" y="166" width="20" height="14" fill="#00ffff"/><rect x="10" y="196" width="20" height="14" fill="#ffff00"/></svg>
<div class="abs" style="left:1194px;top:0;width:1px;height:31px;background:#323232"></div>
<div class="abs" style="left:1195px;top:0;width:358px;height:31px;background:#4a4a4a"></div>
<div class="abs" style="left:1195px;top:31px;width:358px;height:218px;background:#333"></div>
<div class="abs" style="left:1195px;top:285px;width:1px;height:676px;background:#404040"></div>
<div class="t" style="left:1209px;top:10px;font-size:13.5px;color:#fff">모듈</div>
<svg style="left:1490px;top:0" width="63" height="31" viewBox="1490 0 63 31"><path d="M1501.6 9.8V8.4a.9.9 0 0 1 .9-.9h4.6a.9.9 0 0 1 .9.9V9.8" fill="none" stroke="#fff" stroke-width="1.3"/><rect x="1496" y="9.6" width="17" height="1.3" fill="#fff"/><path d="M1498.9 11.5V22.3a.9.9 0 0 0 .9.9h8.9a.9.9 0 0 0 .9-.9V11.5" fill="#bdbdbd" stroke="#fff" stroke-width="1.8"/><path d="M1504.3 12V22" stroke="#fff" stroke-width="1.1"/><path d="M1501.4 12V22M1507.2 12V22" stroke="#8a8a8a" stroke-width="0" /><path d="M1529 16H1544M1536.5 8.3V24" stroke="#fff" stroke-width="3.2" fill="none"/></svg>
<div class="abs" style="left:1370px;top:112px;width:8px;height:56px;background:#c8c8c8"></div>
<div class="abs" style="left:1274px;top:120px;width:200px;height:40px;background:#2d89ea;border-radius:5px"></div>
<div class="t" style="left:1274px;top:133px;width:200px;text-align:center;font-size:13px;color:#fff">이미지 분류</div>
<svg style="left:1490px;top:133px" width="16" height="14" viewBox="1490 133 16 14"><path d="M1492.6 140.6L1496.3 144L1503.2 136" fill="none" stroke="#fff" stroke-width="1.3"/></svg>
<div class="abs" style="left:1195px;top:249px;width:118px;height:36px;background:#4a4a4a"></div>
<div class="abs" style="left:1315px;top:249px;width:118px;height:36px;background:#4a4a4a"></div>
<div class="abs" style="left:1435px;top:249px;width:118px;height:36px;background:#2d89ea"></div>
<div class="t" style="left:1238px;top:260px;font-size:13px;color:#fff">레이블링</div>
<div class="t" style="left:1369px;top:260px;font-size:13px;color:#fff">훈련</div>
<div class="t" style="left:1490px;top:261px;font-size:13px;color:#fff">검증</div>
<svg style="left:1195px;top:249px" width="358" height="36" viewBox="1195 249 358 36"><g fill="#4a4a4a" stroke="#f0f0f0" stroke-width="1"><path d="M1223.5 262.5H1232.500V272H1223.5z" fill="none"/><rect x="1221.6" y="260.6" width="3.4" height="3.4" rx="0.8"/><rect x="1230.8" y="260.6" width="3.4" height="3.4" rx="0.8"/><rect x="1221.6" y="270.2" width="3.4" height="3.4" rx="0.8"/><rect x="1230.8" y="270.2" width="3.4" height="3.4" rx="0.8"/></g><g fill="none" stroke="#f0f0f0" stroke-width="1"><path d="M1360 262.2L1354 272.3H1366z"/><path d="M1360 267.5V262M1360 267.500L1355 271.8M1360 267.500L1365 271.800"/></g><g fill="#4a4a4a" stroke="#f0f0f0" stroke-width="1"><circle cx="1360" cy="261.8" r="1.6"/><circle cx="1354" cy="272.2" r="1.6"/><circle cx="1366" cy="272.2" r="1.6"/><circle cx="1360" cy="268" r="1.5"/></g><rect x="1474.3" y="260.5" width="11.5" height="13" rx="1" fill="none" stroke="#fff" stroke-width="1.1"/><path d="M1479.500 265H1483.500M1479.500 269H1483.500M1476.3 265L1477.2 265.8L1478.4 264.3M1476.3 269L1477.2 269.800L1478.4 268.3" stroke="#fff" stroke-width="1.1" fill="none"/></svg>
<div class="abs" style="left:1433px;top:250px;width:124px;height:43px;border:6px solid #f3981f"></div>
<div class="t" style="left:1204px;top:309px;font-size:13px;color:#fff">검증 파라미터 설정</div>
<svg style="left:1480px;top:305px" width="70" height="20" viewBox="1480 305 70 20"><path d="M1488.3 309.5V321.500L1496 315.500z" fill="#fff"/><path d="M1514.500 309.500V320.500" stroke="#484848" stroke-width="1"/><path d="M1530.4 312A5.800 5.800 0 1 1 1529.500 316.300" fill="none" stroke="#fff" stroke-width="1.4"/><path d="M1527.700 309.800L1532 310.500L1528.800 314z" fill="#fff"/><path d="M1535 311.700V315.400L1537.500 317.700" fill="none" stroke="#fff" stroke-width="1.3"/></svg>
<div class="abs" style="left:1204px;top:337px;width:341px;height:1px;background:#404040"></div>
<div class="t" style="left:1204px;top:359px;font-size:12.5px;color:#fff">CAM</div>
<div class="abs" style="left:1242px;top:356px;width:16px;height:16px;border-radius:8px;background:#565656"></div>
<div class="t" style="left:1242px;top:359px;width:16px;text-align:center;font-size:10.5px;font-weight:bold;color:#e8b53a">?</div>
<div class="abs" style="left:1501px;top:352px;width:44px;height:24px;background:#565656;border-radius:2px"></div>
<div class="t" style="left:1501px;top:359px;width:44px;text-align:center;font-size:12.5px;color:#fff">생성</div>
<div class="abs" style="left:1204px;top:386px;width:341px;height:1px;background:#404040"></div>
<div class="t" style="left:1204px;top:403px;font-size:13px;color:#fff">검증 결과</div>
<div class="abs" style="left:1204px;top:437px;width:341px;height:473px;background:#363636"></div>
<div class="abs" style="left:1205px;top:438px;width:100px;height:67px;background:#2d2d2d"></div>
<div class="abs" style="left:1305px;top:503px;width:240px;height:1px;background:#424242"></div>
<div class="abs" style="left:1314px;top:448px;width:15px;height:13px;background:#00ffff"></div>
<div class="t" style="left:1339px;top:448px;font-size:13px;color:#fff;letter-spacing:-0.3px">Back</div>
<div class="t" style="left:1314px;top:482px;font-size:12.5px;color:#fff">신뢰도:1.00</div>
<svg style="left:1215px;top:439px" width="80" height="65" viewBox="0 0 80 65"><rect width="80" height="65" fill="#060606"/><defs><linearGradient id="tg" gradientUnits="userSpaceOnUse" x1="372" y1="0" x2="1131" y2="0"><stop offset="0" stop-color="#e2e2e2"/><stop offset="0.1" stop-color="#fafafa"/><stop offset="0.76" stop-color="#f6f6f6"/><stop offset="0.88" stop-color="#b0b0b0"/><stop offset="1" stop-color="#8c8c8c"/></linearGradient></defs><g transform="scale(0.07905) translate(-145,-78)"><path d="M372.0 250.0C372.0 248.6 372.6 247.1 373.5 246.0C374.7 244.6 376.2 243.1 378.0 243.0C389.3 242.1 400.7 242.6 412.0 243.0C413.7 243.1 415.5 243.6 417.0 244.5C418.3 245.3 419.0 246.8 420.0 248.0C422.3 250.7 424.5 253.5 427.0 256.0C435.5 264.5 444.4 272.6 453.0 281.0C461.5 289.3 470.0 297.7 478.5 306.0C487.0 314.3 495.4 322.8 504.0 331.0C512.5 339.1 521.2 347.2 530.0 355.0C538.5 362.5 547.4 369.6 556.0 377.0C564.4 384.3 572.5 391.9 581.0 399.0C589.5 406.1 598.0 413.1 607.0 419.5C615.4 425.5 624.1 430.9 633.0 436.0C641.3 440.7 649.9 444.8 658.5 449.0C666.6 453.0 674.4 457.7 683.0 460.6C691.2 463.3 699.9 464.5 708.5 465.7C716.9 466.9 725.5 467.6 734.0 467.8C742.7 468.0 751.4 467.8 760.0 467.0C772.4 465.9 784.8 464.3 797.0 462.0C805.8 460.4 814.4 458.0 823.0 455.4C831.6 452.8 840.4 450.3 848.5 446.4C853.8 443.9 858.2 439.8 863.0 436.5C871.5 430.5 880.2 424.8 888.5 418.5C897.2 411.9 905.7 405.0 914.0 398.0C922.8 390.5 931.3 382.7 940.0 375.0C948.7 367.3 957.7 360.0 966.0 352.0C974.7 343.7 982.7 334.7 991.0 326.0C999.7 316.7 1008.6 307.6 1017.0 298.0C1025.9 287.9 1034.6 277.5 1043.0 267.0C1051.8 256.0 1059.1 243.9 1068.5 233.4C1072.4 229.0 1076.8 223.9 1082.6 222.6C1094.1 220.1 1106.2 222.0 1118.0 222.6C1119.8 222.7 1121.6 223.3 1123.0 224.5C1124.3 225.6 1125.4 227.3 1125.5 229.0C1126.5 245.0 1125.7 261.0 1126.3 277.0C1127.2 302.7 1129.0 328.3 1130.0 354.0C1130.7 371.2 1131.5 388.5 1131.5 405.7C1131.5 408.2 1131.1 410.8 1130.0 413.0C1128.9 415.2 1127.2 417.3 1125.0 418.5C1119.3 421.7 1113.3 424.6 1107.0 426.0C1094.4 428.9 1081.1 428.5 1068.5 431.4C1065.5 432.1 1062.9 434.3 1060.8 436.5C1057.0 440.5 1055.0 446.2 1051.0 450.0C1048.3 452.6 1043.7 452.8 1041.0 455.4C1031.8 464.1 1023.9 474.1 1015.6 483.7C1006.9 493.8 998.8 504.4 990.0 514.5C981.6 524.2 972.9 533.7 964.0 543.0C955.7 551.7 947.2 560.2 938.5 568.5C930.2 576.4 921.9 584.4 913.0 591.7C904.7 598.6 896.0 605.0 887.0 611.0C878.7 616.6 870.0 621.4 861.4 626.4C854.3 630.5 847.4 634.9 840.0 638.2C832.5 641.6 824.1 642.7 816.7 646.4C811.7 648.9 808.2 653.9 803.3 656.7C798.5 659.4 792.5 659.8 788.0 662.9C784.4 665.4 781.8 669.2 779.7 673.0C777.9 676.2 778.4 680.3 776.6 683.4C774.9 686.4 772.5 689.3 769.4 691.0C766.7 692.5 763.3 692.6 760.2 692.5C757.4 692.4 754.5 691.9 752.0 690.6C749.2 689.1 746.4 687.2 744.7 684.5C742.4 680.8 743.0 675.7 740.6 672.0C738.4 668.6 735.1 665.7 731.4 663.9C726.6 661.5 720.8 662.1 716.0 659.8C710.3 657.1 706.2 651.6 700.5 649.0C695.0 646.4 688.6 646.2 682.8 644.4C674.1 641.7 665.4 639.0 657.0 635.4C648.2 631.7 639.6 627.4 631.4 622.5C622.4 617.1 614.0 610.9 605.7 604.5C596.8 597.6 588.5 590.1 580.0 582.7C571.3 575.1 562.7 567.4 554.2 559.5C545.5 551.5 537.1 543.1 528.5 535.0C519.9 526.9 511.3 518.9 502.8 510.7C494.1 502.2 485.5 493.7 477.0 485.0C468.3 476.1 460.0 467.0 451.4 458.0C449.3 455.8 447.5 453.3 445.0 451.6C443.1 450.3 440.9 449.1 438.6 449.0C424.4 448.2 410.1 451.0 396.0 449.0C391.5 448.4 388.0 444.5 384.7 441.4C381.6 438.4 378.0 435.2 377.0 431.0C374.9 422.6 376.0 413.7 375.7 405.0C374.9 383.0 374.2 361.0 373.7 339.0C373.0 309.3 372.1 279.7 372.0 250.0Z" fill="url(#tg)"/><g fill="#0a0a0a"><circle cx="406.8" cy="280.7" r="18.9"/><circle cx="452.6" cy="325.2" r="17.9"/><circle cx="398.8" cy="359.9" r="19.9"/><circle cx="496.0" cy="368.9" r="18.9"/><circle cx="444.6" cy="405.4" r="18.9"/><circle cx="404.5" cy="426.7" r="11.0"/><circle cx="541.5" cy="413.9" r="17.3"/><circle cx="489.5" cy="451.6" r="18.4"/><circle cx="587.1" cy="458.5" r="16.8"/><circle cx="640.9" cy="469.6" r="16.8"/><circle cx="533.2" cy="494.8" r="18.9"/><circle cx="579.4" cy="539.0" r="16.8"/><circle cx="643.7" cy="533.0" r="18.9"/><circle cx="716.2" cy="499.0" r="16.8"/><circle cx="797.6" cy="497.0" r="17.9"/><circle cx="720.0" cy="562.9" r="18.9"/><circle cx="645.0" cy="596.3" r="17.9"/><circle cx="721.3" cy="625.6" r="18.9"/><circle cx="801.7" cy="559.5" r="19.9"/><circle cx="803.5" cy="623.8" r="19.9"/><circle cx="872.2" cy="462.6" r="18.4"/><circle cx="926.0" cy="447.0" r="19.9"/><circle cx="876.8" cy="526.0" r="21.0"/><circle cx="938.0" cy="528.7" r="19.9"/><circle cx="980.0" cy="481.0" r="21.0"/><circle cx="878.0" cy="590.0" r="19.9"/><circle cx="1023.0" cy="438.0" r="19.9"/><circle cx="970.8" cy="400.5" r="19.9"/><circle cx="1014.5" cy="351.7" r="17.9"/><circle cx="1058.2" cy="305.4" r="16.8"/><circle cx="1099.3" cy="257.8" r="15.8"/><circle cx="1112.2" cy="340.1" r="16.8"/><circle cx="1068.5" cy="387.7" r="17.9"/><circle cx="1103.2" cy="405.7" r="7.4"/><circle cx="760.5" cy="665.5" r="7.6"/></g></g></svg>
<div class="abs" style="left:1204px;top:917px;width:172px;height:32px;background:#5a5a5a;border-radius:4px"></div>
<div class="abs" style="left:1380px;top:917px;width:165px;height:32px;background:#5a5a5a;border-radius:4px"></div>
<div class="t" style="left:1204px;top:928px;width:166px;text-align:center;font-size:12.5px;color:#fff">검증</div>
<div class="t" style="left:1380px;top:928px;width:165px;text-align:center;font-size:12.5px;color:#fff">내보내기</div>
<div class="abs" style="left:1206px;top:910px;width:170px;height:43px;border:6px solid #f3981f"></div></body></html>
